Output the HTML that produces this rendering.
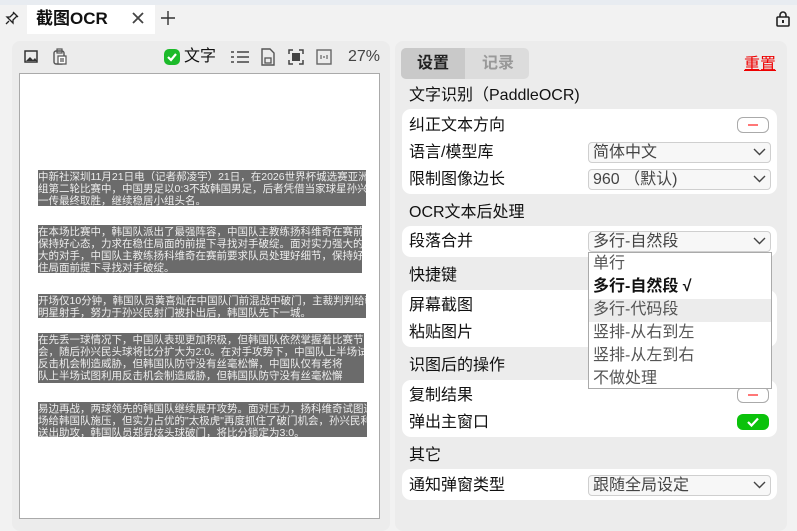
<!DOCTYPE html>
<html><head><meta charset="utf-8"><style>
*{box-sizing:border-box;margin:0;padding:0}
body{width:797px;height:522px;overflow:hidden;background:#f2f2f2;font-family:"Liberation Sans","Noto Sans CJK SC",sans-serif;position:relative;color:#111}
.abs{position:absolute}
.tabbar{left:0;top:0;width:797px;height:34px;background:#f2f2f2}
.tab{left:27px;top:5px;width:128px;height:29px;background:#fff}
.panel{background:#ececec;border-radius:8px}
.card{position:absolute;left:402px;width:375px;background:#fff;border-radius:9px}
.lbl{position:absolute;left:409px;font-size:16px;line-height:20px}
.combo{position:absolute;left:588px;width:183px;height:21px;border:1px solid #cfcfcf;border-radius:4px;background:#f7f7f7;font-size:16px;line-height:19px;padding-left:4px;color:#444}
.combo svg{position:absolute;right:4px;top:5px}
.blk{position:absolute;left:38px;background:#6b6b6b;color:#eee;font-size:10.5px;line-height:12px;overflow:hidden;padding-top:1px;white-space:nowrap}
.dd{position:absolute;left:588px;top:252px;width:184px;height:137px;background:#fff;border:1px solid #aaa;font-size:16px}
.dd div{height:23px;line-height:22px;padding-left:4px;color:#555}
.sw{position:absolute;left:737px;width:32px;height:16px;border-radius:6px}
</style></head><body>
<div class="abs tabbar"></div>
<div class="abs" style="left:0;top:0;width:797px;height:5px;background:#e8ecf1"></div>
<div class="abs tab"></div>
<svg class="abs" style="left:4px;top:10px" width="16" height="16" viewBox="0 0 16 16"><path d="M9 2l5 5M10 3l-4 4-3 0 6 6 0-3 4-4M5 11l-3 3" fill="none" stroke="#222" stroke-width="1.3"/></svg>
<div class="abs" style="left:36px;top:9px;font-size:17px;font-weight:bold;line-height:20px">截图OCR</div>
<svg class="abs" style="left:131px;top:11px" width="14" height="14"><path d="M2 2l10 10M12 2L2 12" stroke="#444" stroke-width="1.8"/></svg>
<svg class="abs" style="left:160px;top:10px" width="16" height="16"><path d="M8 1v14M1 8h14" stroke="#333" stroke-width="1.4"/></svg>
<svg class="abs" style="left:775px;top:10px" width="16" height="17"><rect x="2" y="7" width="12" height="9" rx="1" fill="none" stroke="#222" stroke-width="1.6"/><path d="M5 7V5a3 3 0 0 1 6 0v2" fill="none" stroke="#222" stroke-width="1.6"/><rect x="7" y="10" width="2" height="3" fill="#222"/></svg>

<div class="abs panel" style="left:12px;top:41px;width:378px;height:490px"></div>
<svg class="abs" style="left:23px;top:49px" width="16" height="16"><rect x="2" y="2" width="12" height="11" fill="none" stroke="#333" stroke-width="1.5"/><path d="M3 12l4-4 3 3 2-2 2 3z" fill="#333"/></svg>
<svg class="abs" style="left:51px;top:48px" width="18" height="18"><rect x="3" y="3" width="10" height="13" rx="2" fill="none" stroke="#555" stroke-width="1.4"/><rect x="6" y="1" width="5" height="4" fill="none" stroke="#555" stroke-width="1.2"/><path d="M7 8h8v8H7zM9 11h4M9 13h4" fill="#fff" stroke="#555" stroke-width="1.2"/></svg>
<svg class="abs" style="left:164px;top:49px" width="16" height="16"><rect x="0" y="0" width="16" height="16" rx="5" fill="#1cba2a"/><path d="M4 8l3 3 5-6" fill="none" stroke="#fff" stroke-width="2.2"/></svg>
<div class="abs" style="left:184px;top:47px;font-size:16px;line-height:20px">文字</div>
<svg class="abs" style="left:231px;top:50px" width="18" height="14"><path d="M0 2h3M6 2h12M0 7h3M6 7h12M0 12h3M6 12h12" stroke="#444" stroke-width="1.6"/></svg>
<svg class="abs" style="left:260px;top:48px" width="16" height="18"><path d="M2 1h8l4 4v12H2z" fill="none" stroke="#555" stroke-width="1.4"/><rect x="5" y="10" width="6" height="5" fill="none" stroke="#555" stroke-width="1.3"/></svg>
<svg class="abs" style="left:288px;top:49px" width="16" height="16"><path d="M1 5V1h4M11 1h4v4M15 11v4h-4M5 15H1v-4" fill="none" stroke="#444" stroke-width="1.5"/><rect x="4" y="4" width="8" height="8" fill="#444"/></svg>
<svg class="abs" style="left:316px;top:49px" width="16" height="16"><rect x="1" y="1" width="14" height="14" fill="none" stroke="#666" stroke-width="1.4"/><path d="M5 6v4M11 6v4M7 8h2" stroke="#666" stroke-width="1.2"/></svg>
<div class="abs" style="left:348px;top:47px;font-size:16px;line-height:20px;color:#444">27%</div>

<div class="abs" style="left:19px;top:73px;width:361px;height:446px;background:#fff;border:1px solid #aaa"></div>
<div class="blk" style="top:170px;width:328px;height:36px">中新社深圳11月21日电（记者郝凌宇）21日，在2026世界杯城选赛亚洲区36强赛C<br>组第二轮比赛中，中国男足以0:3不敌韩国男足，后者凭借当家球星孙兴民的两射<br>一传最终取胜，继续稳居小组头名。</div>
<div class="blk" style="top:225px;width:324px;height:48px">在本场比赛中，韩国队派出了最强阵容，中国队主教练扬科维奇在赛前要求队员<br>保持好心态，力求在稳住局面的前提下寻找对手破绽。面对实力强大的对手，<br>大的对手，中国队主教练扬科维奇在赛前要求队员处理好细节，保持好心态<br>住局面前提下寻找对手破绽。</div>
<div class="blk" style="top:294px;width:328px;height:24px">开场仅10分钟，韩国队员黄喜灿在中国队门前混战中破门，主裁判判给韩国队点球<br>明星射手，努力于孙兴民射门被扑出后，韩国队先下一城。</div>
<div class="blk" style="top:333px;width:326px;height:50px">在先丢一球情况下，中国队表现更加积极，但韩国队依然掌握着比赛节奏，<br>会，随后孙兴民头球将比分扩大为2:0。在对手攻势下，中国队上半场试图利用<br>反击机会制造威胁，但韩国队防守没有丝毫松懈，中国队仅有老将<br>队上半场试图利用反击机会制造威胁，但韩国队防守没有丝毫松懈</div>
<div class="blk" style="top:402px;width:329px;height:35px">易边再战，两球领先的韩国队继续展开攻势。面对压力，扬科维奇试图通过换人调整在中<br>场给韩国队施压，但实力占优的"太极虎"再度抓住了破门机会，孙兴民利用前场定位球<br>送出助攻，韩国队员郑昇炫头球破门，将比分锁定为3:0。</div>

<div class="abs panel" style="left:395px;top:41px;width:392px;height:490px"></div>
<div class="abs" style="left:401px;top:48px;width:128px;height:31px;background:#dcdcdc;border-radius:5px"></div>
<div class="abs" style="left:401px;top:48px;width:64px;height:31px;background:#c9c9c9;border-radius:5px 0 0 5px"></div>
<div class="abs" style="left:417px;top:54px;font-size:16px;font-weight:bold;line-height:20px;color:#222">设置</div>
<div class="abs" style="left:482px;top:54px;font-size:16px;font-weight:bold;line-height:20px;color:#999">记录</div>
<div class="abs" style="left:744px;top:55px;font-size:16px;line-height:20px;color:#e00;text-decoration:underline">重置</div>

<div class="lbl" style="top:86px">文字识别（PaddleOCR)</div>
<div class="card" style="top:109px;height:85px"></div>
<div class="lbl" style="top:116px">纠正文本方向</div>
<div class="sw" style="top:117px;border:1.5px solid #aaa;background:#fff"><div style="position:absolute;left:10px;top:5.5px;width:10px;height:2px;background:#f77"></div></div>
<div class="lbl" style="top:143px">语言/模型库</div><div class="combo" style="top:142px">简体中文<svg width="13" height="8"><path d="M1 1l5.5 5.5L12 1" fill="none" stroke="#444" stroke-width="1.4"/></svg></div>
<div class="lbl" style="top:170px">限制图像边长</div><div class="combo" style="top:169px">960 （默认)<svg width="13" height="8"><path d="M1 1l5.5 5.5L12 1" fill="none" stroke="#444" stroke-width="1.4"/></svg></div>

<div class="lbl" style="top:203px">OCR文本后处理</div>
<div class="card" style="top:226px;height:31px"></div>
<div class="lbl" style="top:232px">段落合并</div><div class="combo" style="top:231px">多行-自然段<svg width="13" height="8"><path d="M1 1l5.5 5.5L12 1" fill="none" stroke="#444" stroke-width="1.4"/></svg></div>

<div class="lbl" style="top:266px">快捷键</div>
<div class="card" style="top:290px;height:57px"></div>
<div class="lbl" style="top:296px">屏幕截图</div>
<div class="lbl" style="top:323px">粘贴图片</div>

<div class="lbl" style="top:356px">识图后的操作</div>
<div class="card" style="top:380px;height:57px"></div>
<div class="lbl" style="top:386px">复制结果</div>
<div class="sw" style="top:387px;border:1.5px solid #aaa;background:#fff"><div style="position:absolute;left:10px;top:5.5px;width:10px;height:2px;background:#f77"></div></div>
<div class="lbl" style="top:413px">弹出主窗口</div>
<div class="sw" style="top:414px;background:#0bc20b"><svg style="position:absolute;left:10px;top:3px" width="12" height="10"><path d="M1 5l3.5 3.5L11 1.5" fill="none" stroke="#fff" stroke-width="2.2"/></svg></div>

<div class="lbl" style="top:446px">其它</div>
<div class="card" style="top:469px;height:31px"></div>
<div class="lbl" style="top:476px">通知弹窗类型</div><div class="combo" style="top:475px">跟随全局设定<svg width="13" height="8"><path d="M1 1l5.5 5.5L12 1" fill="none" stroke="#444" stroke-width="1.4"/></svg></div>

<div class="dd">
<div>单行</div>
<div style="font-weight:bold;color:#111">多行-自然段 √</div>
<div style="background:#ececec">多行-代码段</div>
<div>竖排-从右到左</div>
<div>竖排-从左到右</div>
<div>不做处理</div>
</div>
</body></html>
